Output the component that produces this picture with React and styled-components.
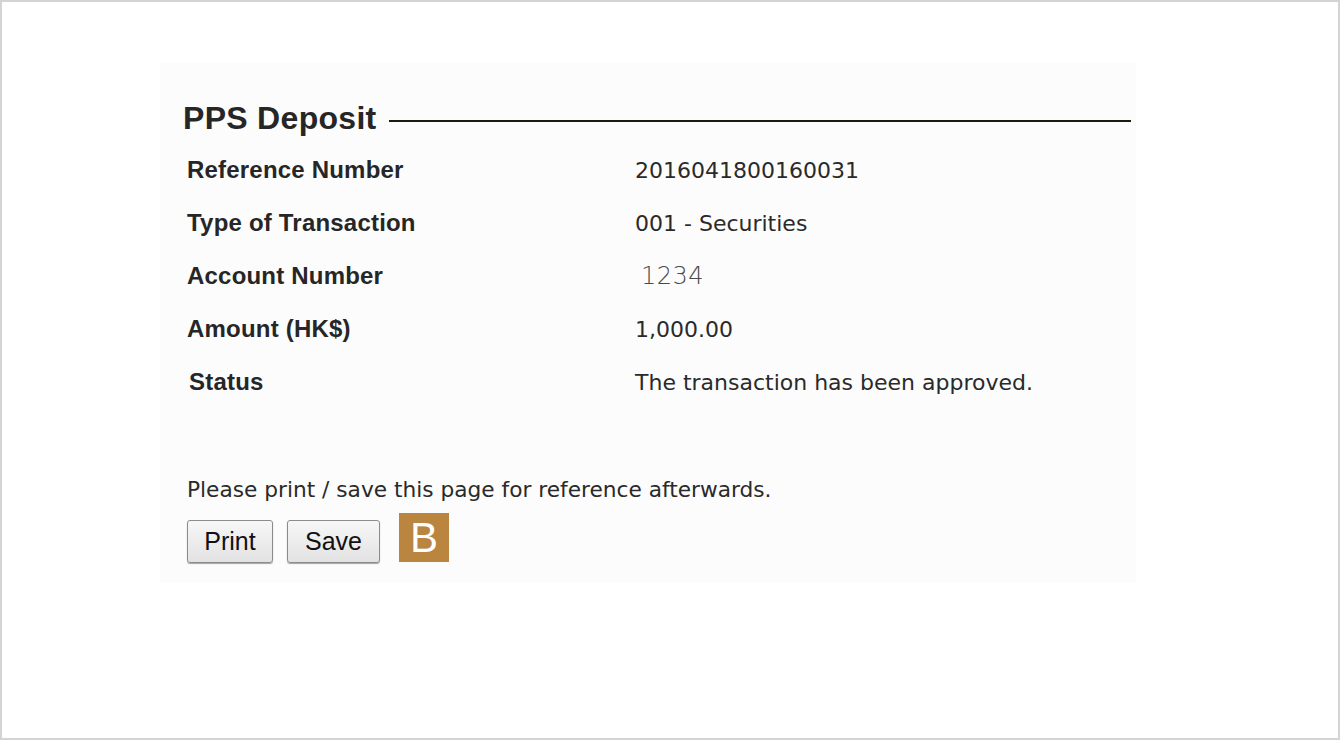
import styled, { createGlobalStyle } from "styled-components";

const GlobalStyle = createGlobalStyle`
  html, body {
    margin: 0;
    padding: 0;
    background: #fff;
  }
`;

const rows = [
  { label: "Reference Number", value: "2016041800160031" },
  { label: "Type of Transaction", value: "001 - Securities" },
  { label: "Account Number", value: "1234", faint: true },
  { label: "Amount (HK$)", value: "1,000.00" },
  { label: "Status", value: "The transaction has been approved.", shift: true },
];

export default function App() {
  return (
    <>
      <GlobalStyle />
      <Frame>
        <Panel>
          <TitleRow>
            <Title>PPS Deposit</Title>
            <Rule />
          </TitleRow>

          <Details>
            {rows.map((r) => (
              <Row key={r.label}>
                <Label $shift={r.shift}>{r.label}</Label>
                <Value $faint={r.faint}>{r.value}</Value>
              </Row>
            ))}
          </Details>

          <Note>Please print / save this page for reference afterwards.</Note>

          <Actions>
            <Button $width={86}>Print</Button>
            <Button $width={93}>Save</Button>
            <Badge>B</Badge>
          </Actions>
        </Panel>
      </Frame>
    </>
  );
}

const Frame = styled.div`
  width: 1340px;
  height: 740px;
  box-sizing: border-box;
  border: 2px solid #d4d4d4;
  background: #fff;
  padding: 61px 0 0 158px;
`;

const Panel = styled.div`
  width: 976px;
  height: 520px;
  box-sizing: border-box;
  background: #fcfcfc;
  padding: 35px 5px 0 23px;
  display: flex;
  flex-direction: column;
`;

const TitleRow = styled.div`
  display: flex;
  align-items: center;
  height: 40px;
`;

const Title = styled.h1`
  margin: 0;
  font-family: "Liberation Sans", Arial, sans-serif;
  font-size: 32px;
  font-weight: bold;
  line-height: 40px;
  letter-spacing: 0.3px;
  color: #262626;
  white-space: nowrap;
`;

const Rule = styled.div`
  flex: 1;
  height: 2px;
  margin: 6px 0 0 12px;
  background: #1c1a0a;
`;

const Details = styled.div`
  margin-top: 5px;
  padding-left: 4px;
`;

const Row = styled.div`
  display: grid;
  grid-template-columns: 448px 1fr;
  align-items: baseline;
  height: 53px;
  line-height: 53px;
`;

const Label = styled.span`
  font-family: "Liberation Sans", Arial, sans-serif;
  font-size: 24px;
  font-weight: bold;
  letter-spacing: 0.2px;
  color: #262626;
  padding-left: ${(p) => (p.$shift ? "2px" : "0")};
`;

const Value = styled.span`
  font-family: "DejaVu Sans", Verdana, sans-serif;
  font-size: ${(p) => (p.$faint ? "24px" : "22px")};
  color: ${(p) => (p.$faint ? "#4a4a4a" : "#2a2a2a")};
  padding-left: ${(p) => (p.$faint ? "6px" : "0")};
  letter-spacing: ${(p) => (p.$faint ? "0.5px" : "0")};
  font-weight: ${(p) => (p.$faint ? 300 : 400)};
`;

const Note = styled.p`
  margin: 67px 0 0 4px;
  font-family: "DejaVu Sans", Verdana, sans-serif;
  font-size: 21.7px;
  line-height: 30px;
  color: #2a2a2a;
`;

const Actions = styled.div`
  display: flex;
  align-items: flex-end;
  gap: 14px;
  margin: 8px 0 0 4px;
`;

const Button = styled.button`
  width: ${(p) => p.$width}px;
  height: 43px;
  padding: 0;
  border: 1px solid #8c8c8c;
  border-radius: 3px;
  background: linear-gradient(#f7f7f7, #e2e2e2);
  box-shadow: 0 1px 1px rgba(0, 0, 0, 0.35);
  font-family: "Liberation Sans", Arial, sans-serif;
  font-size: 25px;
  color: #111;
  cursor: pointer;
`;

const Badge = styled.div`
  width: 50px;
  height: 49px;
  margin: 0 0 1px 5px;
  background: #b9853f;
  color: #fff;
  display: flex;
  align-items: center;
  justify-content: center;
  font-family: "Liberation Sans", Arial, sans-serif;
  font-size: 42px;
  line-height: 1;
`;
